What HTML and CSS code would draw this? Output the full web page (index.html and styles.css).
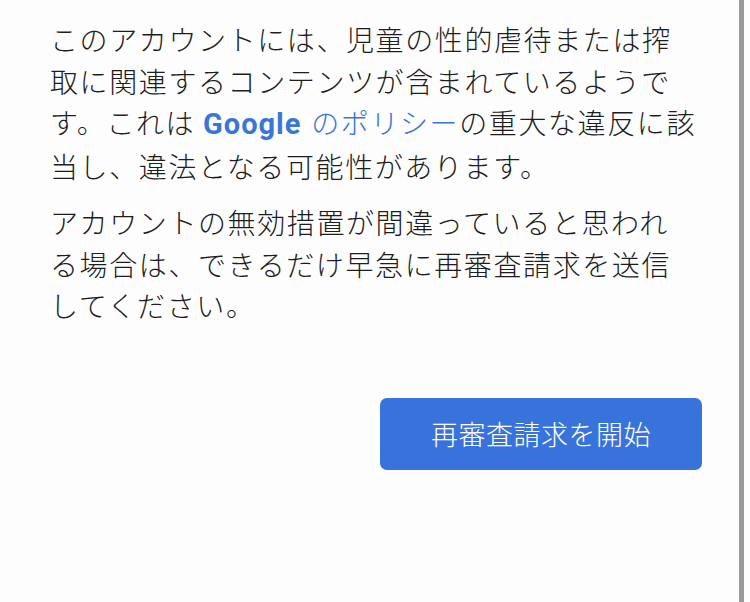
FILE: index.html
```html
<!DOCTYPE html>
<html lang="ja">
<head>
<meta charset="utf-8">
<link rel="stylesheet" href="styles.css">
</head>
<body>
<div class="screen">
  <main class="content">
    <p class="msg">このアカウントには、児童の性的虐待または搾<br>取に関連するコンテンツが含まれているようで<br>す。これは <a class="link" href="#"><span class="brand">Google</span> のポリシー</a>の重大な違反に該<br>当し、違法となる可能性があります。</p>
    <p class="msg msg-second">アカウントの無効措置が間違っていると思われ<br>る場合は、できるだけ早急に再審査請求を送信<br>してください。</p>
    <div class="actions">
      <button class="primary" type="button">再審査請求を開始</button>
    </div>
  </main>
  <div class="scrollbar"></div>
</div>
</body>
</html>
```

FILE: styles.css
```css
html, body {
  margin: 0;
  padding: 0;
  background: #fdfdfd;
}

.screen {
  display: flex;
  width: 750px;
  height: 602px;
  overflow: hidden;
}

.content {
  flex: 1;
  padding: 19px 0 0 50px;
  font-family: "Noto Sans CJK JP", "Noto Sans", sans-serif;
  color: #1e1e1e;
}

.msg {
  margin: 0;
  font-size: 28px;
  font-weight: 300;
  line-height: 41.5px;
  letter-spacing: 1.6px;
  white-space: nowrap;
}

.msg-second {
  margin-top: 15px;
}

.link {
  color: #3a76d6;
  text-decoration: none;
}

.brand {
  font-family: Roboto, "Noto Sans", sans-serif;
  font-weight: 700;
  font-size: 29px;
  letter-spacing: 1px;
  margin-right: 2px;
}

.actions {
  display: flex;
  justify-content: flex-end;
  padding-right: 37px;
  margin-top: 71px;
}

.primary {
  width: 322px;
  height: 72px;
  border: none;
  border-radius: 7px;
  background: #3873dc;
  color: #ffffff;
  font-family: "Noto Sans CJK JP", "Noto Sans", sans-serif;
  font-size: 27px;
  font-weight: 300;
  letter-spacing: 0.5px;
  padding: 0;
}

.scrollbar {
  width: 5px;
  height: 100%;
  background: #999999;
  margin-right: 6px;
}
```
